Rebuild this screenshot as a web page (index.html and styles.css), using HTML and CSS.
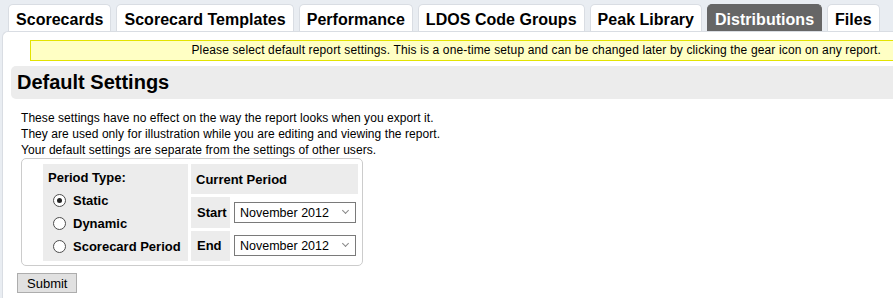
FILE: index.html
```html
<!DOCTYPE html>
<html lang="en">
<head>
  <meta charset="UTF-8" />
  <title>Default Settings</title>
  <link rel="stylesheet" href="styles.css">
</head>
<body>

  <div class="tabs">
    <div class="tab">Scorecards</div>
    <div class="tab">Scorecard Templates</div>
    <div class="tab">Performance</div>
    <div class="tab">LDOS Code Groups</div>
    <div class="tab">Peak Library</div>
    <div class="tab active">Distributions</div>
    <div class="tab">Files</div>
  </div>

  <div class="panel">
    <div class="notice">Please select default report settings. This is a one-time setup and can be changed later by clicking the gear icon on any report.</div>

    <h2 class="heading">Default Settings</h2>

    <p class="intro">
      These settings have no effect on the way the report looks when you export it.<br>
      They are used only for illustration while you are editing and viewing the report.<br>
      Your default settings are separate from the settings of other users.
    </p>

    <div class="settings">
      <table>
        <tr>
          <td class="period-type" rowspan="3">
            <div class="period-title">Period Type:</div>
            <label class="radio"><input type="radio" name="ptype" checked> Static</label>
            <label class="radio"><input type="radio" name="ptype"> Dynamic</label>
            <label class="radio"><input type="radio" name="ptype"> Scorecard Period</label>
          </td>
          <td class="current" colspan="2">Current Period</td>
        </tr>
        <tr>
          <td class="row-label">Start</td>
          <td class="row-select">
            <span class="select">
              <select><option>November 2012</option></select>
            </span>
          </td>
        </tr>
        <tr>
          <td class="row-label">End</td>
          <td class="row-select">
            <span class="select">
              <select><option>November 2012</option></select>
            </span>
          </td>
        </tr>
      </table>
    </div>

    <button class="submit">Submit</button>
  </div>

</body>
</html>
```

FILE: styles.css
```css
body {
  margin: 0;
  background: #e9edf2;
  font-family: 'Liberation Sans', Arial, sans-serif;
  font-size: 12px;
  color: #000;
  height: 298px;
  overflow: hidden;
}

.tabs {
  display: flex;
  gap: 5px;
  padding: 4px 0 0 8px;
}

.tab {
  height: 26px;
  line-height: 29px;
  padding: 0 7px;
  background: #fff;
  border: 1px solid #d9dde3;
  border-bottom: none;
  border-radius: 5px 5px 0 0;
  font-size: 16px;
  font-weight: bold;
  letter-spacing: 0.03px;
  white-space: nowrap;
}

.tab.active {
  background: #666;
  border-color: #666;
  color: #fff;
}

.panel {
  margin-left: 2px;
  height: 270px;
  background: #fff;
  border-top: 1px solid #d9dde3;
  border-left: 1px solid #d9dde3;
  border-top-left-radius: 6px;
}

.notice {
  margin: 8px 0 0 27px;
  padding: 0 12px;
  height: 19px;
  line-height: 19px;
  background: #ffffc4;
  border: 1px solid #e3e300;
  border-right: none;
  text-align: right;
  letter-spacing: 0.14px;
  white-space: nowrap;
}

.heading {
  margin: 5px 0 0 8px;
  height: 33px;
  line-height: 33px;
  padding-left: 6px;
  background: #ececec;
  border-radius: 5px 0 0 5px;
  font-size: 20px;
  font-weight: bold;
}

.intro {
  margin: 11px 0 0 18px;
  line-height: 16px;
  letter-spacing: 0.06px;
}

.settings {
  display: flow-root;
  width: fit-content;
  margin: 0 0 0 18px;
  padding: 2px 1px 1px 18px;
  border: 1px solid #ccc;
  border-radius: 5px;
}

.settings table {
  border-spacing: 3px;
}

.settings td {
  padding: 0;
  font-weight: bold;
}

.period-type {
  width: 145px;
  height: 97px;
  background: #ececec;
  vertical-align: top;
  padding: 0 0 0 5px !important;
  box-sizing: border-box;
}

.period-title {
  font-size: 13px;
  margin-top: 6px;
  margin-bottom: 4px;
}

.radio {
  display: flex;
  align-items: center;
  gap: 7px;
  height: 23px;
  padding-left: 5px;
  font-size: 13px;
  white-space: nowrap;
}

.radio input {
  appearance: none;
  margin: 0;
  width: 13px;
  height: 13px;
  border: 1px solid #4d4d4d;
  border-radius: 50%;
  background: #fff;
  display: grid;
  place-items: center;
}

.radio input:checked::before {
  content: "";
  width: 5px;
  height: 5px;
  border-radius: 50%;
  background: #222;
}

.current {
  height: 30px;
  padding-left: 5px !important;
  background: #ececec;
  font-size: 13px;
}

.row-label {
  width: 39px;
  height: 30px;
  padding-left: 6px !important;
  box-sizing: border-box;
  background: #ececec;
  font-size: 13px;
}

.row-select {
  width: 124px;
  padding-left: 1px !important;
}

.select {
  position: relative;
  display: block;
  width: 122px;
}

.select select {
  display: block;
  appearance: none;
  width: 122px;
  height: 21px;
  padding: 1px 0 0 5px;
  border: 1px solid #7a7a7a;
  border-radius: 0;
  background: #fff;
  font-family: 'Liberation Sans', Arial, sans-serif;
  font-size: 12.5px;
  color: #000;
}

.select::after {
  content: "";
  position: absolute;
  right: 8px;
  top: 6px;
  width: 4px;
  height: 4px;
  border-right: 1px solid #888;
  border-bottom: 1px solid #888;
  transform: rotate(45deg);
  pointer-events: none;
}

.submit {
  display: block;
  margin: 7px 0 0 14px;
  height: 20px;
  padding: 0 9px;
  background: #e1e1e1;
  border: 1px solid #adadad;
  border-radius: 0;
  font-family: 'Liberation Sans', Arial, sans-serif;
  font-size: 13px;
  color: #000;
}
```
